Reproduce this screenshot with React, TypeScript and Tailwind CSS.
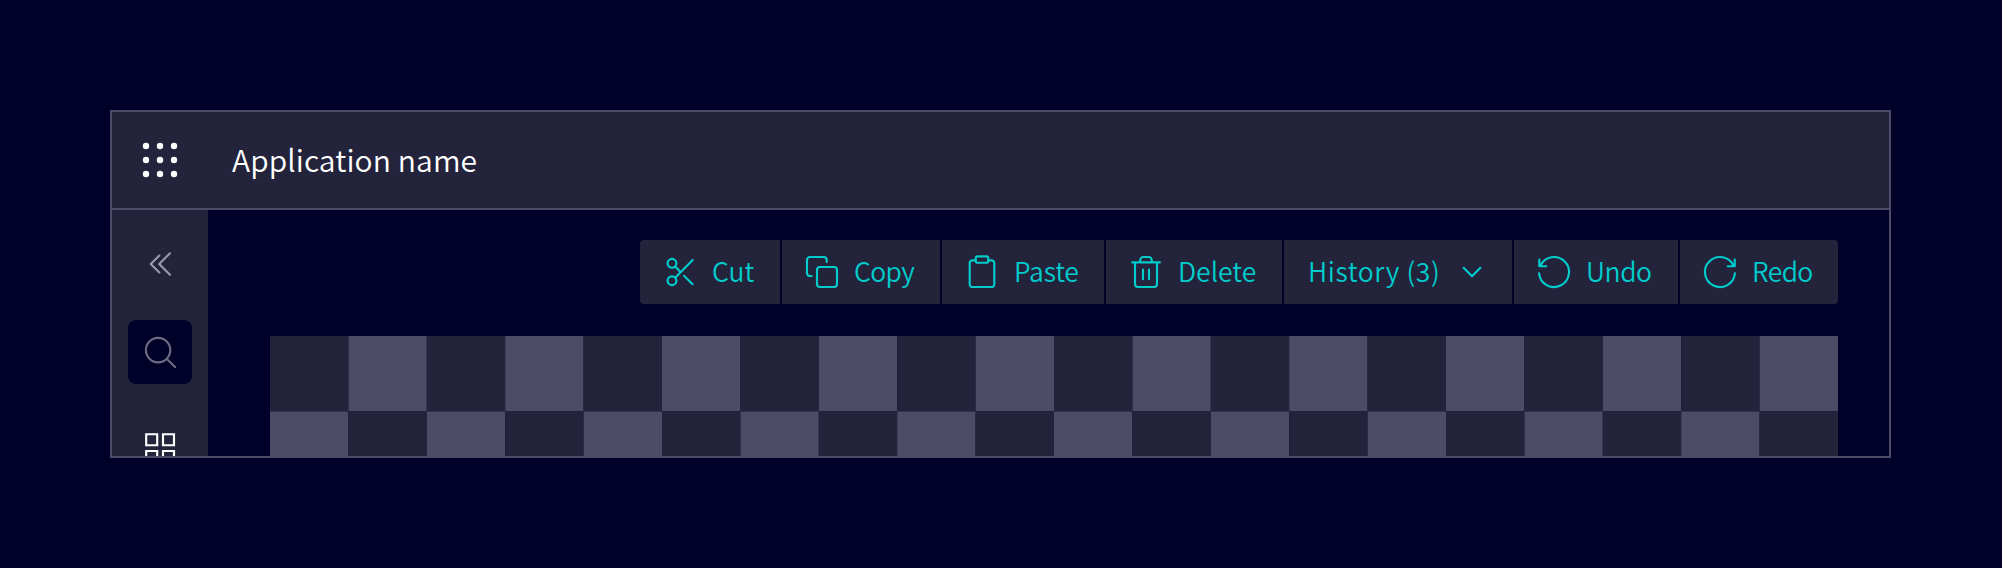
import type { ReactNode } from 'react';

function Icon({ children, className = '' }: { children: ReactNode; className?: string }) {
  return (
    <svg
      viewBox="0 0 32 32"
      className={`size-8 shrink-0 overflow-visible ${className}`}
      fill="none"
      stroke="currentColor"
      strokeWidth={2.15}
      strokeLinecap="round"
      strokeLinejoin="round"
      aria-hidden="true"
    >
      {children}
    </svg>
  );
}

const CutIcon = () => (
  <Icon>
    <circle cx="8" cy="7.3" r="4.4" />
    <circle cx="8" cy="24.7" r="4.4" />
    <path d="M28.7 4 11.4 21.4M11.2 10.6 16 15.6M20 19.8l8.6 8.4" />
  </Icon>
);
const CopyIcon = () => (
  <Icon>
    <rect x="11" y="11" width="20" height="20" rx="3" />
    <path d="M5.7 20H4a3 3 0 0 1-3-3V4a3 3 0 0 1 3-3h13.7a3 3 0 0 1 3 3v2" />
  </Icon>
);
const PasteIcon = () => (
  <Icon>
    <rect x="9.7" y="0.3" width="12.6" height="6.4" rx="2" />
    <path d="M9.7 4.3H6.5A2.8 2.8 0 0 0 3.7 7.1v21A2.8 2.8 0 0 0 6.5 31h19a2.8 2.8 0 0 0 2.8-2.9v-21a2.8 2.8 0 0 0-2.8-2.8h-3.2" />
  </Icon>
);
const DeleteIcon = () => (
  <Icon>
    <path d="M2.2 6.4h27.6M10.2 6V4.2A3.2 3.2 0 0 1 13.4 1h5.2a3.2 3.2 0 0 1 3.2 3.2V6M5 6.8V28a3 3 0 0 0 3 3h16a3 3 0 0 0 3-3V6.8M13 13.6v9.6M19 13.6v9.6" />
  </Icon>
);
const ChevronIcon = () => (
  <Icon>
    <path d="m7.6 11.8 8.4 8.4 8.4-8.4" />
  </Icon>
);
const UndoIcon = () => (
  <Icon>
    <path d="M1.1 17.4A15 15 0 1 0 2.3 10M1.3 3.6v6.7h6.9" />
  </Icon>
);
const RedoIcon = () => (
  <Icon>
    <path d="M30.9 17.4A15 15 0 1 1 29.7 10M30.7 3.6v6.7h-6.9" />
  </Icon>
);

type Action = { label: string; width: string; icon?: ReactNode; trailing?: ReactNode; tracking: string };

const actions: Action[] = [
  { label: 'Cut', width: 'w-[140px]', icon: <CutIcon />, tracking: 'tracking-[0px]' },
  { label: 'Copy', width: 'w-[158px]', icon: <CopyIcon />, tracking: 'tracking-[-0.6px]' },
  { label: 'Paste', width: 'w-[162px]', icon: <PasteIcon />, tracking: 'tracking-[-0.2px]' },
  { label: 'Delete', width: 'w-[176px]', icon: <DeleteIcon />, tracking: 'tracking-[0px]' },
  { label: 'History (3)', width: 'w-[228px]', trailing: <ChevronIcon />, tracking: 'tracking-[0.6px]' },
  { label: 'Undo', width: 'w-[164px]', icon: <UndoIcon />, tracking: 'tracking-[-0.4px]' },
  { label: 'Redo', width: 'w-[158px]', icon: <RedoIcon />, tracking: 'tracking-[-0.6px]' },
];

function Toolbar() {
  return (
    <div className="flex justify-end gap-0.5">
      {actions.map(({ label, width, icon, trailing, tracking }) => (
        <button
          key={label}
          className={`flex h-16 items-center gap-4 bg-[#23233c] px-6 text-[#00cccc] first:rounded-l last:rounded-r ${width}`}
        >
          {icon}
          <span className={`grow whitespace-nowrap pb-[3px] text-left text-[26.5px] leading-8 font-[350] ${tracking}`}>
            {label}
          </span>
          {trailing}
        </button>
      ))}
    </div>
  );
}

const CELL_W = 78.4;
const CELL_H = 75.4;

function Checkerboard() {
  return (
    <svg className="mt-8 h-[120px] w-[1568px] shrink-0" viewBox="0 0 1568 120" aria-hidden="true">
      {[0, 1].map((row) =>
        Array.from({ length: 20 }, (_, col) => (
          <rect
            key={`${row}-${col}`}
            x={col * CELL_W}
            y={row * CELL_H}
            width={CELL_W}
            height={CELL_H}
            fill={(row + col) % 2 ? '#4c4c68' : '#23233c'}
          />
        )),
      )}
    </svg>
  );
}

function Sidebar() {
  return (
    <nav className="flex w-24 shrink-0 flex-col items-center bg-[#23233c] pt-[22px]">
      <div className="flex size-16 shrink-0 items-center justify-center text-[#9999a9]">
        <Icon>
          <path d="M26 5.3 15.2 16 26 26.8M15.3 7.6 6.8 16l8.5 8.4" />
        </Icon>
      </div>
      <div className="mt-6 flex size-16 shrink-0 items-center justify-center rounded-lg bg-[#000028] text-[#6b6b82]">
        <Icon>
          <circle cx="14.1" cy="14.1" r="12.2" />
          <path d="m22.9 22.9 8.2 8.2" />
        </Icon>
      </div>
      <div className="mt-8 flex size-16 shrink-0 items-center justify-center text-white">
        <Icon>
          <path strokeLinejoin="miter" d="M2.2 2.2h11v11h-11zM19 2.2h11v11H19zM2.2 19h11v11h-11zM19 19h11v11H19z" />
        </Icon>
      </div>
    </nav>
  );
}

export default function App() {
  return (
    <div className="flex h-[568px] w-[2002px] items-start bg-[#000028] pt-[110px] pl-[110px] font-['Noto_Sans_CJK_SC','Noto_Sans',sans-serif]">
      <div className="flex h-[348px] w-[1781px] flex-col overflow-hidden border-2 border-[#4c4c68]">
        <header className="flex h-[98px] shrink-0 items-center border-b-2 border-[#4c4c68] bg-[#23233c] text-white">
          <div className="flex w-24 justify-center">
            <Icon>
              <g fill="currentColor" stroke="none">
                {[2, 16, 30].map((y) => [2, 16, 30].map((x) => <circle key={`${x}-${y}`} cx={x} cy={y} r="3.2" />))}
              </g>
            </Icon>
          </div>
          <h1 className="ml-6 pb-0.5 text-[30px] leading-10 font-[350] tracking-[0.1px]">Application name</h1>
        </header>
        <div className="flex h-[246px] overflow-hidden">
          <Sidebar />
          <main className="flex w-[1681px] shrink-0 flex-col overflow-hidden pt-[30px] pr-[51px] pl-[62px]">
            <Toolbar />
            <Checkerboard />
          </main>
        </div>
      </div>
    </div>
  );
}
